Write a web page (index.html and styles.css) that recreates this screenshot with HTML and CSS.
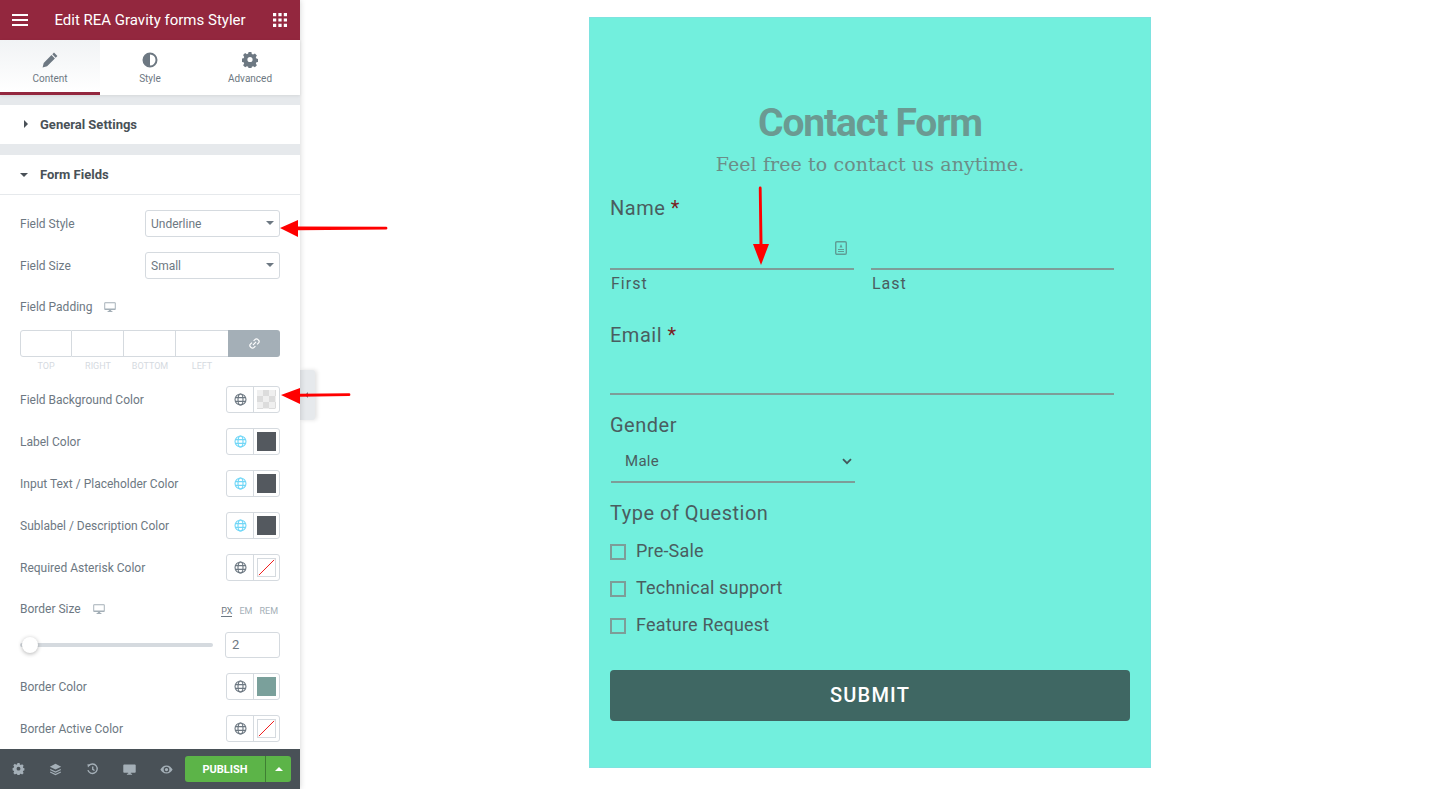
FILE: index.html
```html
<!DOCTYPE html>
<html lang="en">
<head>
<meta charset="utf-8">
<title>Edit REA Gravity forms Styler</title>
<link rel="stylesheet" href="styles.css">
</head>
<body>
<svg class="defs" width="0" height="0" aria-hidden="true">
  <defs>
    <symbol id="globe" viewBox="0 0 14 14"><g fill="none" stroke="currentColor" stroke-width="1.2"><circle cx="7" cy="7" r="5.9"/><ellipse cx="7" cy="7" rx="2.7" ry="5.9"/><path d="M1.3 5h11.4M1.3 9h11.4"/></g></symbol>
    <symbol id="monitor" viewBox="0 0 14 14"><path fill="currentColor" d="M1.2 1.500h11.600c.5 0 .9.4.9.9v7.200c0 .5-.4.9-.9.9H8.400v1.200h1.400v1H4.200v-1h1.400v-1.200H1.200c-.5 0-.9-.4-.9-.9V2.400c0-.5.4-.9.9-.9zm.2 1.100v6.200h11.200V2.600z"/></symbol>
    <symbol id="cog" viewBox="0 0 16 16"><path fill="currentColor" fill-rule="evenodd" d="M6.600.5h2.800l.4 2 1.300.6 1.800-1.100 2 2-1.100 1.800.6 1.300 2 .4v2.800l-2 .4-.6 1.300 1.100 1.800-2 2-1.800-1.100-1.300.6-.4 2H6.600l-.4-2-1.300-.6-1.800 1.100-2-2 1.100-1.800-.6-1.300-2-.4V7.100l2-.4.6-1.300-1.100-1.800 2-2 1.800 1.100 1.300-.6zM8 5.400a2.600 2.600 0 1 0 0 5.200 2.600 2.600 0 0 0 0-5.200z" transform="translate(0 -.5)"/></symbol>
  </defs>
</svg>

<div class="app">
  <aside class="panel">
    <header class="topbar">
      <svg class="burger" viewBox="0 0 16 12" aria-hidden="true"><path d="M0 1h16M0 6h16M0 11h16"/></svg>
      <span class="topbar-title">Edit REA Gravity forms Styler</span>
      <svg class="apps" viewBox="0 0 13 13" aria-hidden="true"><path d="M0 0h3v3H0zM5 0h3v3H5zM10 0h3v3h-3zM0 5h3v3H0zM5 5h3v3H5zM10 5h3v3h-3zM0 10h3v3H0zM5 10h3v3H5zM10 10h3v3h-3z"/></svg>
    </header>

    <nav class="tabs">
      <div class="tab tab-active">
        <svg class="tab-icon" viewBox="0 0 16 16" aria-hidden="true"><path d="M12 .6l3.400 3.400-1.700 1.700-3.400-3.400zM9.500 3.100l3.400 3.400-7.800 7.800-4.500 1.100 1.100-4.500z"/></svg>
        <span>Content</span>
      </div>
      <div class="tab">
        <svg class="tab-icon" viewBox="0 0 16 16" aria-hidden="true"><path fill-rule="evenodd" d="M8 .5a7.500 7.500 0 1 1 0 15 7.500 7.500 0 0 1 0-15zm0 2v11a5.500 5.500 0 0 0 0-11z"/></svg>
        <span>Style</span>
      </div>
      <div class="tab">
        <svg class="tab-icon" viewBox="0 0 16 16" aria-hidden="true"><use href="#cog"/></svg>
        <span>Advanced</span>
      </div>
    </nav>

    <div class="scroller">
      <div class="section-head section-first">
        <i class="caret caret-right"></i>
        <span>General Settings</span>
      </div>
      <div class="section-head section-open">
        <i class="caret caret-down"></i>
        <span>Form Fields</span>
      </div>

      <div class="controls">
        <div class="row">
          <label class="row-label">Field Style</label>
          <div class="fake-select">Underline<i class="caret caret-down select-caret"></i></div>
        </div>
        <div class="row">
          <label class="row-label">Field Size</label>
          <div class="fake-select">Small<i class="caret caret-down select-caret"></i></div>
        </div>

        <div class="row-head">
          <label class="row-label">Field Padding</label>
          <svg class="device"><use href="#monitor"/></svg>
        </div>
        <div class="dims">
          <div class="dim"></div><div class="dim"></div><div class="dim"></div><div class="dim"></div>
          <div class="dim-link">
            <svg viewBox="0 0 12 12" aria-hidden="true"><g fill="none" stroke="#fff" stroke-width="1.300"><path d="M5 3.200 6.700 1.500a2 2 0 0 1 2.900 0l.9.900a2 2 0 0 1 0 2.900L8.800 7"/><path d="M7 8.800 5.300 10.500a2 2 0 0 1-2.900 0l-.9-.9a2 2 0 0 1 0-2.900L3.200 5"/><path d="M4.300 7.700l3.400-3.400"/></g></svg>
          </div>
        </div>
        <div class="dim-labels"><span>TOP</span><span>RIGHT</span><span>BOTTOM</span><span>LEFT</span></div>

        <div class="row">
          <label class="row-label">Field Background Color</label>
          <div class="color"><span class="color-globe"><svg><use href="#globe"/></svg></span><span class="color-cell"><i class="swatch swatch-checker"></i></span></div>
        </div>
        <div class="row">
          <label class="row-label">Label Color</label>
          <div class="color"><span class="color-globe is-global"><svg><use href="#globe"/></svg></span><span class="color-cell"><i class="swatch swatch-dark"></i></span></div>
        </div>
        <div class="row">
          <label class="row-label">Input Text / Placeholder Color</label>
          <div class="color"><span class="color-globe is-global"><svg><use href="#globe"/></svg></span><span class="color-cell"><i class="swatch swatch-dark"></i></span></div>
        </div>
        <div class="row">
          <label class="row-label">Sublabel / Description Color</label>
          <div class="color"><span class="color-globe is-global"><svg><use href="#globe"/></svg></span><span class="color-cell"><i class="swatch swatch-dark"></i></span></div>
        </div>
        <div class="row">
          <label class="row-label">Required Asterisk Color</label>
          <div class="color"><span class="color-globe"><svg><use href="#globe"/></svg></span><span class="color-cell"><svg class="swatch swatch-none" viewBox="0 0 19 19" aria-hidden="true"><path d="M1 18 18 1"/></svg></span></div>
        </div>

        <div class="row-head">
          <label class="row-label">Border Size</label>
          <svg class="device"><use href="#monitor"/></svg>
          <div class="units"><span class="unit-active">PX</span><span>EM</span><span>REM</span></div>
        </div>
        <div class="slider-row">
          <div class="slider"><i class="thumb"></i></div>
          <div class="slider-value">2</div>
        </div>

        <div class="row">
          <label class="row-label">Border Color</label>
          <div class="color"><span class="color-globe"><svg><use href="#globe"/></svg></span><span class="color-cell"><i class="swatch swatch-teal"></i></span></div>
        </div>
        <div class="row">
          <label class="row-label">Border Active Color</label>
          <div class="color"><span class="color-globe"><svg><use href="#globe"/></svg></span><span class="color-cell"><svg class="swatch swatch-none" viewBox="0 0 19 19" aria-hidden="true"><path d="M1 18 18 1"/></svg></span></div>
        </div>
      </div>
    </div>

    <footer class="footer">
      <div class="footer-icons">
        <svg class="fi-small" viewBox="0 0 16 16" aria-hidden="true"><use href="#cog"/></svg>
        <svg viewBox="0 0 16 16" aria-hidden="true"><path fill="currentColor" d="M8 1l7 3.500L8 8 1 4.500z"/><path fill="none" stroke="currentColor" stroke-width="1.400" d="M1.500 8 8 11.200 14.500 8M1.500 11 8 14.300 14.500 11"/></svg>
        <svg class="fi-small" viewBox="0 0 16 16" aria-hidden="true"><g fill="none" stroke="currentColor" stroke-width="1.800"><path d="M3.300 3.400A6.300 6.300 0 1 1 1.900 9.500"/><path d="M8.300 4.500v4l2.400 1.500"/></g><path fill="currentColor" d="M1.200 1.500 5.600 2 2 6z"/></svg>
        <svg viewBox="0 0 14 14" aria-hidden="true"><path fill="currentColor" d="M1.200 1.500h11.600c.5 0 .9.400.9.900v7.200c0 .5-.4.900-.9.900H8.400v1.200h1.400v1H4.200v-1h1.400v-1.200H1.200c-.5 0-.9-.4-.9-.9V2.400c0-.5.4-.9.900-.9z"/></svg>
        <svg viewBox="0 0 16 16" aria-hidden="true"><path fill="currentColor" fill-rule="evenodd" d="M8 3c3.600 0 6.300 2.700 7.500 5-1.200 2.300-3.900 5-7.500 5S1.700 10.300.5 8C1.700 5.700 4.400 3 8 3zm0 1.500a3.500 3.500 0 1 0 0 7 3.500 3.500 0 0 0 0-7zM8 6a2 2 0 1 1 0 4 2 2 0 0 1 0-4z"/></svg>
      </div>
      <div class="publish">
        <span class="publish-main">PUBLISH</span>
        <span class="publish-more"><i class="caret caret-up"></i></span>
      </div>
    </footer>
  </aside>

  <div class="panel-handle"></div>

  <main class="stage">
    <section class="card">
      <h1 class="card-title">Contact Form</h1>
      <p class="card-sub">Feel free to contact us anytime.</p>

      <div class="field-label label-name">Name <em>*</em></div>
      <div class="name-grid">
        <div class="name-col">
          <div class="line-input">
            <svg class="contact-icon" viewBox="0 0 12 14" aria-hidden="true"><rect x=".7" y=".7" width="10.600" height="12.600" rx="1.200" fill="none" stroke="#5e9d95" stroke-width="1.400"/><path fill="#5e9d95" d="M6 3l1.500 3.500h-3zM3 8h6v1H3zM3 10h6v1H3z"/></svg>
          </div>
          <div class="sublabel">First</div>
        </div>
        <div class="name-col">
          <div class="line-input"></div>
          <div class="sublabel">Last</div>
        </div>
      </div>

      <div class="field-label label-email">Email <em>*</em></div>
      <div class="line-input email-input"></div>

      <div class="field-label label-gender">Gender</div>
      <div class="gender-select">
        <span>Male</span>
        <svg viewBox="0 0 10 7" aria-hidden="true"><path d="M1 1.200 5 5.200 9 1.200" fill="none" stroke="#43575a" stroke-width="1.800"/></svg>
      </div>

      <div class="field-label label-type">Type of Question</div>
      <ul class="checks">
        <li><i class="checkbox"></i>Pre-Sale</li>
        <li><i class="checkbox"></i>Technical support</li>
        <li><i class="checkbox"></i>Feature Request</li>
      </ul>

      <button class="submit" type="button">SUBMIT</button>
    </section>
  </main>

  <svg class="arrows" viewBox="0 0 1440 789" aria-hidden="true">
    <g fill="#ff0000" stroke="none">
      <path d="M280 228 298 220V226.500L386 226.800a1.400 1.400 0 0 1 0 2.800L298 230.200V237z"/>
      <path d="M281 395 300 388V393.700L349 393.300a1.400 1.400 0 0 1 0 2.800L300 396.700V404z"/>
      <path d="M761 265 753 244H759.500L758.800 188a1.400 1.400 0 0 1 2.800 0L762.500 244H769z"/>
    </g>
  </svg>
</div>
</body>
</html>
```
FILE: styles.css
```css
* { box-sizing: border-box; }
html, body { margin: 0; height: 100%; }
body { font-family: Roboto, "Liberation Sans", sans-serif; background: #fff; overflow: hidden; }
.defs { position: absolute; }

.app { display: flex; height: 789px; position: relative; }

/* Panel */
.panel { width: 300px; flex: none; height: 100%; display: flex; flex-direction: column; background: #fff; box-shadow: 0 0 6px rgba(0,0,0,.18); position: relative; z-index: 2; }

.topbar { height: 40px; flex: none; background: #93273e; color: #fff; display: flex; align-items: center; padding: 0 13px 0 12px; }
.burger { width: 16px; height: 12px; stroke: #fff; stroke-width: 2; flex: none; }
.topbar-title { flex: 1; text-align: center; font-size: 15px; font-weight: 400; margin-top: -1px; padding-right: 1px; }
.apps { width: 14px; height: 14px; fill: #fff; flex: none; }

.tabs { height: 55px; flex: none; display: flex; background: #fff; position: relative; z-index: 1; box-shadow: 0 1px 3px rgba(0,0,0,.08); }
.tab { width: 100px; display: flex; flex-direction: column; align-items: center; padding-top: 12px; font-size: 10px; color: #6d7882; line-height: 12px; }
.tab-icon { width: 16px; height: 16px; fill: #6d7882; color: #6d7882; margin-bottom: 5px; }
.tab-active { background: linear-gradient(#f1f3f5, #fff); border-bottom: 3px solid #93273e; }

.scroller { flex: 1; min-height: 0; overflow: hidden; background: #fff; }
.section-head { height: 39px; display: flex; align-items: center; background: #fff; font-size: 13px; font-weight: 700; color: #495157; padding-left: 40px; position: relative; }
.section-first { margin-top: 10px; box-shadow: 0 -10px 0 #e6e9ec; }
.section-open { margin-top: 11px; box-shadow: 0 -11px 0 #e6e9ec; height: 40px; border-bottom: 1px solid #e6e9ec; }
.caret { width: 0; height: 0; display: block; border-style: solid; border-color: transparent; }
.caret-right { position: absolute; left: 24px; top: 15px; border-width: 4px 0 4px 4px; border-left-color: #495157; }
.caret-down { position: absolute; left: 20px; top: 18px; border-width: 4px 4px 0 4px; border-top-color: #495157; }
.caret-up { border-width: 0 4px 4px 4px; border-bottom-color: #fff; }

.controls { padding: 15px 20px 0; }
.row { display: flex; align-items: center; justify-content: space-between; height: 27px; margin-bottom: 15px; }
.row-label { font-size: 12px; color: #6d7882; }
.fake-select { width: 135px; height: 27px; border: 1px solid #d5dadf; border-radius: 3px; font-size: 12px; color: #6d7882; line-height: 27px; padding-left: 5px; position: relative; }
.select-caret { left: auto; right: 5px; top: 10px; border-width: 4px 4px 0 4px; border-top-color: #6d7882; }

.row-head { display: flex; align-items: center; height: 20px; margin-top: 18px; gap: 12px; }
.device { width: 12px; height: 12px; color: #a4afb7; }
.units { margin-left: auto; display: flex; gap: 7px; font-size: 9px; color: #a4afb7; margin-top: 4px; padding-right: 2px; }
.unit-active { color: #6d7882; border-bottom: 1px solid #6d7882; line-height: 10px; }

.dims { display: flex; height: 27px; margin-top: 13px; }
.dim { width: 52px; border: 1px solid #d5dadf; border-left-width: 0; }
.dim:first-child { border-left-width: 1px; border-radius: 3px 0 0 3px; }
.dim:nth-child(4) { border-right-width: 0; }
.dim-link { width: 52px; background: #a4afb7; border-radius: 0 3px 3px 0; display: flex; align-items: center; justify-content: center; }
.dim-link svg { width: 11px; height: 11px; }
.dim-labels { display: flex; margin-top: 3px; height: 12px; margin-bottom: 14px; }
.dim-labels span { width: 52px; text-align: center; font-size: 9px; line-height: 12px; color: #d5dadf; }

.color { width: 54px; height: 27px; border: 1px solid #d5dadf; border-radius: 3px; display: flex; flex: none; }
.color-globe { width: 27px; border-right: 1px solid #d5dadf; display: flex; align-items: center; justify-content: center; color: #6d7882; }
.color-globe svg { width: 13px; height: 13px; }
.is-global { color: #71d7f7; }
.color-cell { flex: 1; display: flex; align-items: center; justify-content: center; }
.swatch { width: 19px; height: 19px; display: block; }
.swatch-dark { background: #54595f; }
.swatch-teal { background: #7aa09b; }
.swatch-checker { background-color: #efefef; background-image: conic-gradient(#dcdcdc 25%, transparent 0 50%, #dcdcdc 0 75%, transparent 0); background-size: 12px 12px; }
.swatch-none { border: 1px solid #d5dadf; stroke: #f01818; stroke-width: 1.100; fill: none; }

.slider-row { display: flex; align-items: center; justify-content: space-between; height: 26px; margin-top: 13px; margin-bottom: 15px; }
.slider { width: 193px; height: 4px; background: #d5dadf; border-radius: 2px; position: relative; }
.thumb { position: absolute; left: 2px; top: -6px; width: 16px; height: 16px; border-radius: 50%; background: #fff; box-shadow: 0 1px 4px rgba(0,0,0,.3); }
.slider-value { width: 55px; height: 26px; border: 1px solid #d5dadf; border-radius: 3px; font-size: 13px; line-height: 24px; padding-left: 6px; color: #6d7882; }

.footer { height: 40px; flex: none; background: #495157; display: flex; align-items: center; padding: 0 9px 0 0; color: #a4afb7; }
.footer-icons { flex: 1; display: flex; align-items: center; }
.footer-icons svg { width: 37px; height: 13px; flex: none; }
.footer-icons .fi-small { height: 12px; }
.publish { width: 106px; height: 26px; display: flex; border-radius: 3px; overflow: hidden; background: #5cb448; color: #fff; flex: none; }
.publish-main { width: 81px; text-align: center; font-size: 11px; font-weight: 700; line-height: 27px; border-right: 1px solid #3f7f33; }
.publish-more { flex: 1; display: flex; align-items: center; justify-content: center; }

.panel-handle { position: absolute; left: 300px; top: 370px; width: 15px; height: 50px; background: #e6e9ec; border-radius: 0 3px 3px 0; box-shadow: 2px 0 4px rgba(0,0,0,.12); z-index: 1; }
.panel-handle::after { content: ""; position: absolute; left: 5px; top: 22px; border-style: solid; border-color: transparent #6d7882 transparent transparent; border-width: 3px 3px 3px 0; }

/* Form card */
.stage { flex: 1; display: flex; justify-content: center; align-items: flex-start; padding-top: 17px; }
.card { width: 562px; height: 751px; background: #72efdd; border: 1px solid #7ee3e0; padding: 0 20px; color: #4a5d60; }
.card-title { margin: 83px 0 0; height: 44px; line-height: 44px; text-align: center; font-size: 39px; font-weight: 700; letter-spacing: -1.150px; color: #6b9a92; }
.card-sub { margin: 7px 0 0; height: 24px; line-height: 24px; text-align: center; font-family: "DejaVu Serif", "Liberation Serif", serif; font-size: 19px; letter-spacing: .1px; color: #6c8d88; }

.field-label { font-size: 20px; line-height: 24px; height: 24px; color: #4a5d60; letter-spacing: .5px; }
.field-label em { font-style: normal; color: #7a1f24; }
.label-name { margin-top: 20px; }
.name-grid { display: grid; grid-template-columns: 244px 243px; column-gap: 17px; margin-top: 24px; }
.line-input { height: 26px; border-bottom: 2px solid #7d9d98; position: relative; }
.contact-icon { position: absolute; right: 7px; top: -3px; width: 12px; height: 14px; }
.sublabel { font-size: 16px; line-height: 20px; margin-top: 4px; padding-left: 1px; letter-spacing: 1px; }
.label-email { margin-top: 29px; }
.email-input { width: 504px; margin-top: 22px; }
.label-gender { margin-top: 18px; }
.gender-select { width: 244px; margin-left: 1px; height: 46px; display: flex; align-items: center; justify-content: space-between; border-bottom: 2px solid #7d9d98; padding: 4px 3px 0 14px; font-size: 15px; letter-spacing: .3px; }
.gender-select svg { width: 10px; height: 7px; }
.label-type { margin-top: 18px; }
.checks { list-style: none; margin: 8px 0 0; padding: 0; }
.checks li { display: flex; align-items: center; height: 37px; padding-bottom: 2px; font-size: 18px; letter-spacing: .2px; }
.checkbox { width: 16px; height: 16px; border: 2px solid #7d9d98; margin: 2px 10px 0 0; flex: none; }
.submit { display: block; width: 520px; height: 51px; margin-top: 26px; padding: 0 0 2px; border: 0; border-radius: 4px; background: #3f6763; color: #fff; font-family: Roboto, sans-serif; font-size: 20px; font-weight: 500; letter-spacing: 1.200px; }

.arrows { position: absolute; left: 0; top: 0; width: 1440px; height: 789px; z-index: 5; pointer-events: none; }
```
